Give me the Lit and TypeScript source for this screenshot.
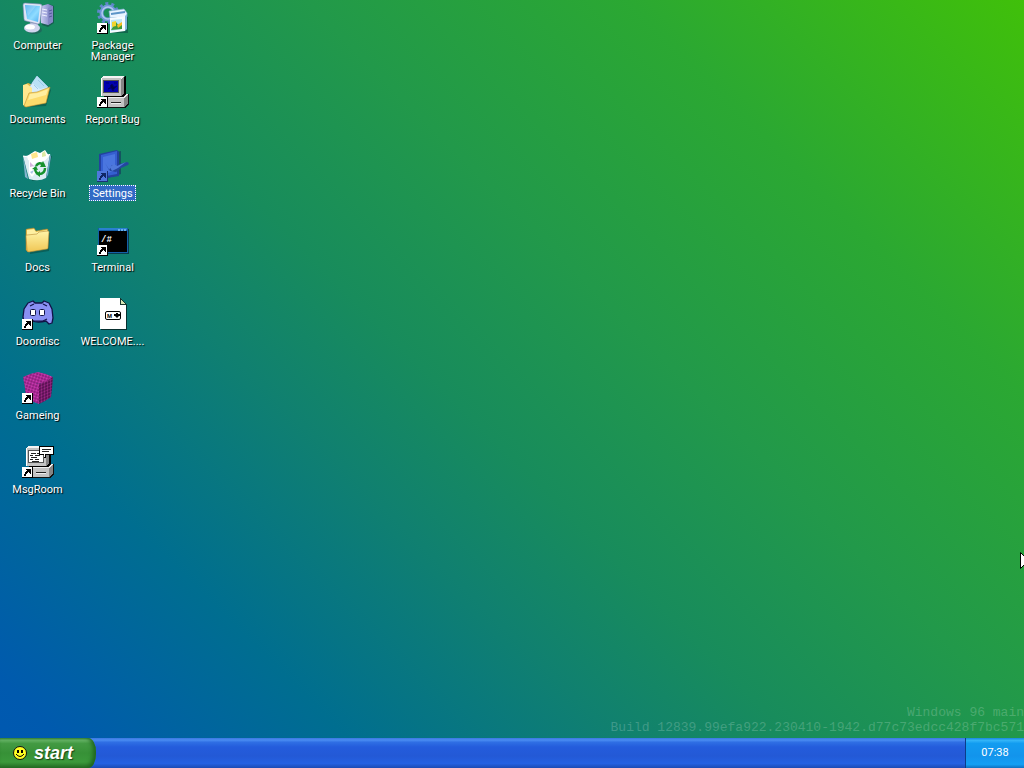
import { LitElement, html, svg, css } from "lit";
import { customElement, property, state } from "lit/decorators.js";
import { classMap } from "lit/directives/class-map.js";

const arrow = "M4 23h5v5H8v-1H7v-1H6v1H5v1H4v2H2v-2h1v-2h1v-1h1v-1H4z";

const shortcut = svg`
  <g shape-rendering="crispEdges">
    <rect x="0" y="21" width="11" height="11" fill="#000"/>
    <rect x="0" y="21" width="10" height="10" fill="#fff"/>
    <path d="${arrow}" fill="#000"/>
  </g>`;

const pc = (screen: string) => svg`
  <g shape-rendering="crispEdges">
    <path d="M7 2h19l2-2h1v18l-3 3h-19z" fill="#000"/>
    <path d="M6 0h21v1h-1v1h-1v1h-20v-2h1z" fill="#f4f4f4"/>
    <rect x="4" y="2" width="20" height="18" fill="#c3c3c3"/>
    <rect x="4" y="2" width="1" height="18" fill="#fff"/>
    <path d="M24 3l3-3v18l-3 2z" fill="#858585"/>
    <rect x="6" y="4" width="16" height="13" fill="#555"/>
    <rect x="7" y="5" width="14" height="11" fill="${screen}"/>
    <path d="M1 21h24l4-3h3v10l-4 4h-27z" fill="#111"/>
    <path d="M2 21h24l3-3h2l-4 4h-25z" fill="#eee"/>
    <rect x="2" y="22" width="25" height="9" fill="#c3c3c3"/>
    <path d="M27 22l4-4v9l-4 4z" fill="#858585"/>
    <rect x="14" y="26" width="10" height="1" fill="#222"/>
    <rect x="14" y="27" width="10" height="1" fill="#eee"/>
  </g>`;

const icons: Record<string, unknown> = {
  computer: svg`
    <defs>
      <linearGradient id="scr" x2="1" y2="1"><stop stop-color="#3fa4ee"/><stop offset=".6" stop-color="#8fdcff"/><stop offset="1" stop-color="#4caef0"/></linearGradient>
      <linearGradient id="cas"><stop stop-color="#c9cdf2"/><stop offset="1" stop-color="#6f74bb"/></linearGradient>
    </defs>
    <path d="M20 4l7-2 5 2v17l-6 4-6-2z" fill="#193c46" opacity=".55"/>
    <path d="M19 4l7-2 5 2v16l-5 3-7-2z" fill="url(#cas)"/>
    <path d="M26 6l5-2v16l-5 3z" fill="#8388c6"/>
    <path d="M20 7l5 1M20 10l5 1M20 13l5 1" stroke="#eef0ff" stroke-width="1"/>
    <path d="M27 9l3-1M27 12l3-1M27 15l3-1" stroke="#555b9c" stroke-width="1"/>
    <path d="M8 20l8 1v5h-7z" fill="#9ea5c8"/>
    <ellipse cx="12" cy="28" rx="8" ry="4" fill="#284c55" opacity=".5"/>
    <ellipse cx="10" cy="26" rx="8" ry="4.500" fill="#d0d5ee"/>
    <ellipse cx="8" cy="25" rx="5" ry="2.500" fill="#fff"/>
    <path d="M1 3q0-2 2-2l15 1q2 0 2 2l-2 16q0 2-2 2l-12-3q-2 0-2-2z" fill="#dfe5f6" stroke="#7782ae" stroke-width=".6"/>
    <path d="M3 3l15 1-2 16-11-3z" fill="url(#scr)"/>
    <path d="M3 3l11 1-8 10z" fill="#fff" opacity=".2"/>`,
  documents: svg`
    <path d="M4 11l12-8 13 11-5 16-20 1z" fill="#0a453c" opacity=".5"/>
    <path d="M2 9l4-2 5 2 8-2 4 3v17l-20 4z" fill="#e5b943"/>
    <path d="M6 13l9-13 11 11-3 12-14 3z" fill="#d6ecfb" stroke="#8eb9d9" stroke-width=".7"/>
    <path d="M15 0l11 11-8 2-8-6z" fill="#b9e0f5"/>
    <path d="M16 4l6 6M12 9l4 4" stroke="#90c4e6" stroke-width=".8"/>
    <path d="M1 9l4-1 5 4v7l-7 11-2-1z" fill="#ffe88f"/>
    <path d="M2 30l5-13 8-1 13-5-4 16-20 4z" fill="#fddb6b" stroke="#bd902f" stroke-width=".6"/>
    <path d="M8 18l8-1 10-4-2 6-18 5z" fill="#fff3ae" opacity=".8"/>`,
  recycle: svg`
    <path d="M5 8l25-2-6 22-14 3z" fill="#09443c" opacity=".5"/>
    <path d="M1 6l27-2-4 24q-7 4-17 1z" fill="#dcecf3"/>
    <path d="M1 6l5 23-3-2z" fill="#83b4ce"/><path d="M28 4l-4 24 2-3 3-18z" fill="#6fa9c8"/>
    <path d="M5 6l8-5 5 2 5-3 4 6-5 5-9 2-7-3z" fill="#fff"/>
    <path d="M9 4l6-2 1 5-6 2z" fill="#ffe68b"/><path d="M20 3l3-2 1 5-4 1z" fill="#dce9a4"/>
    <path d="M7 10l7 3-3 3 4 5-5 6-3-4z" fill="#fff"/><path d="M8 12l4 4-4 1z" fill="#d5b4dd"/><path d="M8 22l4-2-2 4z" fill="#a8c4e5"/>
    <g fill="none" stroke="#16912c" stroke-width="2.400"><path d="M14 16q3-5 8-1"/><path d="M23 18q0 6-6 6"/><path d="M13 18q0 4 3 6"/></g>
    <path d="M21 11l3 6-6 0zM18 21v6l-4-3zM10 19l4-3 2 4z" fill="#16912c"/>
    <path d="M1 6l5 1 8 5 9-2 5-6" fill="none" stroke="#fff"/>`,
  folder: svg`
    <defs><linearGradient id="fld" x2="0" y2="1"><stop stop-color="#fff4a8"/><stop offset="1" stop-color="#f0c654"/></linearGradient></defs>
    <path d="M6 8l22 1-1 18-19 3z" fill="#094a40" opacity=".55"/>
    <path d="M4 6q0-1 1-1l7-1 2 3 11-2q1 0 1 1v5l-20 17-2-2z" fill="#e8bd4a" stroke="#a77f2e" stroke-width=".5"/>
    <path d="M5 6l7-1 2 3 11-2v4l-20 3z" fill="#fff0a1"/>
    <path d="M4 12q0-1 1-1l10-1 2-2 9-1q1 0 1 1l-1 16q0 1-1 1l-18 3q-2 0-2-2z" fill="url(#fld)" stroke="#b88c35" stroke-width=".6"/>`,
  discord: svg`
    <path d="M6 5l5-2 2 2h7l2-2 5 2 3 6 1 9-1 5-3 1-3-3q-8 2-14 0l-3 3-5-2-1-5 1-8z" fill="#8990f3" stroke="#111347" stroke-width="1.300" stroke-linejoin="round"/>
    <path d="M8 8l4-2M25 8l-4-2M9 22l3 1h9l4-2" fill="none" stroke="#111347" stroke-width="1.200"/>
    <rect x="8.500" y="11.500" width="5" height="6" rx="1" fill="#fff" stroke="#111347"/>
    <rect x="17.500" y="11.500" width="5" height="6" rx="1" fill="#fff" stroke="#111347"/>${shortcut}`,
  cube: svg`
    <defs><pattern id="dots" width="3" height="3" patternUnits="userSpaceOnUse" patternTransform="rotate(18)"><path d="M0 0h3v3H0z" fill="#7a176b"/><circle cx="1.500" cy="1.500" r="1.200" fill="#cf3bb5"/></pattern>
    <pattern id="dots2" width="3" height="3" patternUnits="userSpaceOnUse" patternTransform="skewY(-22)"><path d="M0 0h3v3H0z" fill="#4c0c47"/><circle cx="1.500" cy="1.500" r="1.200" fill="#9a2785"/></pattern></defs>
    <path d="M1 5L8 2l8-2 8 2 7 3-6 5-8 2-9-2z" fill="url(#dots)"/><path d="M1 5l7 4 9 3v20l-8-3-5-3-1-10z" fill="url(#dots)"/><path d="M17 12l8-3 6-4-1 12-1 8-6 4-6 3z" fill="url(#dots2)"/>${shortcut}`,
  message: svg`${pc("#fff")}
    <g shape-rendering="crispEdges"><path d="M9 7h5M15 7h2M8 9h3M13 9h5M9 11h6M8 13h3M13 13h4M10 15h7" stroke="#222"/>
    <path d="M17 0h15v9h-8v3h-2v-3h-5z" fill="#000"/><path d="M18 1h13v7h-8v3h-1V8h-4z" fill="#fff"/><path d="M20 3.500h9M20 5.500h7" stroke="#222"/></g>${shortcut}`,
  pack: svg`
    <g transform="translate(11 11)"><circle r="9.500" fill="none" stroke="#5f86cb" stroke-width="3" stroke-dasharray="3 2.970"/><circle r="6.500" fill="none" stroke="#6f96d8" stroke-width="4"/>
    <circle r="6" fill="none" stroke="#b0c8f0" stroke-width="1.500"/></g>
    <path d="M13 14h18v17H14z" fill="#0b4c45" opacity=".6"/>
    <path d="M12 9l15-2 3 4v4l-17 1z" fill="#e9f5ff" stroke="#7eaed4" stroke-width=".7"/>
    <path d="M14 12l14-2" stroke="#5d95c7" stroke-width="2"/>
    <path d="M13 16l15-2v15l-15 2z" fill="#f7fcff"/><path d="M28 14l2-2v15l-2 2z" fill="#82b7df"/>
    <path d="M14 18l11-1v10l-11 2z" fill="#bce6f7"/><path d="M14 28l5-8 3 4 3-3v6z" fill="#3d9a3b"/><path d="M15 20l4-1v5l-4 1z" fill="#f2d52e"/><path d="M20 23l5-3v3l-4 3z" fill="#f5bd22"/>${shortcut}`,
  bug: svg`${pc("#0000b0")}
    <path d="M9 7h3M17 7h3M13 10l2-2 2 3 3-1-3 3-1 2-2-3-3 1 3-2z" fill="#000050" stroke="#000070"/>${shortcut}`,
  settings: svg`
    <path d="M6 5l18-4v23L7 29z" fill="#15345b" opacity=".6"/>
    <path d="M2 4l18-4 2 2v24L4 29l-2-2z" fill="#23419e"/><path d="M4 5l16-4v23L4 27z" fill="#355fd0"/><path d="M6 7l12-3v17L6 24z" fill="#4a76df"/>
    <path d="M8 13l4 7 3-5 4 2 4-3 7-2q3 1 1 3l-7 3-5 4-6-1z" fill="#24469f"/><path d="M10 12l3 5 4-3 3 2 9-4-8 6-6 3z" fill="#4f79da"/>
    <g shape-rendering="crispEdges"><rect y="21" width="11" height="11" fill="#193275"/><rect y="21" width="10" height="10" fill="#4f78dc"/><path d="${arrow}" fill="#102765"/></g>`,
  terminal: svg`
    <g shape-rendering="crispEdges"><rect x="2" y="5" width="30" height="25" fill="#073b4a"/><rect x="1" y="4" width="30" height="25" fill="#145fa8"/>
    <rect x="2" y="4" width="28" height="2" fill="#2a80d0"/><path d="M21 5h2v2h-2zM24 5h2v2h-2zM27 5h2v2h-2z" fill="#6ab0ee"/><rect x="2" y="7" width="28" height="21" fill="#000"/></g>
    <text class="prompt" x="4" y="18">/#</text>${shortcut}`,
  markdown: svg`
    <g shape-rendering="crispEdges"><path d="M4 1h20l6 6v25H4z" fill="#082f2f"/><path d="M3 0h20v6h6v25H3z" fill="#fff"/><path d="M23 0l6 6h-6z" fill="#d7e8b5" stroke="#17352f"/></g>
    <rect x="8.500" y="13.500" width="15" height="8" rx="1.500" fill="#fff" stroke="#000"/><text class="md" x="10" y="20">M</text>
    <path d="M19 15h2v1h2v2h-1l-2 2-2-2h-1v-2h2z" fill="#000"/>`,
};

@customElement("desktop-icon")
class DesktopIcon extends LitElement {
  @property() icon = "";
  @property() label = "";
  @property({ type: Boolean }) selected = false;
  static styles = css`
    :host { display: block; height: 74px; }
    .item { display: flex; flex-direction: column; align-items: center; gap: 3px; width: 100%; height: 100%; border: 0; padding: 0; background: none; cursor: default; color: #fff; font: 11px/11px Roboto, sans-serif; }
    .picture { width: 32px; height: 32px; flex: none; overflow: visible; }
    .label { max-width: 70px; box-sizing: border-box; padding: 2px 2px 1px; border: 1px solid transparent; text-shadow: 1px 1px 1px #000; overflow: hidden; text-overflow: ellipsis; }
    .selected { background: #316ac5; border: 1px dotted #fff; text-shadow: none; }
    .prompt { font: bold 9px "Liberation Mono", monospace; fill: #fff; }
    .md { font: bold 6px "Liberation Sans", sans-serif; }
  `;
  render() {
    return html`<button class="item">
      <svg class="picture" viewBox="0 0 32 32" aria-hidden="true">${icons[this.icon]}</svg>
      <span class=${classMap({ label: true, selected: this.selected })}>${this.label}</span>
    </button>`;
  }
}

@customElement("app-root")
class AppRoot extends LitElement {
  @state() private selected = "Settings";
  private columns = [
    [["computer", "Computer"], ["documents", "Documents"], ["recycle", "Recycle Bin"], ["folder", "Docs"], ["discord", "Doordisc"], ["cube", "Gameing"], ["message", "MsgRoom"]],
    [["pack", "Package Manager"], ["bug", "Report Bug"], ["settings", "Settings"], ["terminal", "Terminal"], ["markdown", "WELCOME...."]],
  ];
  static styles = css`
    :host { display: flex; flex-direction: column; height: 100vh; overflow: hidden; position: relative;
      background: linear-gradient(45deg, #0058b2 0%, #005aae 5%, #006e90 21%, #108070 36%, #188c5c 46%, #22994a 60%, #2ba832 78%, #40c00a 100%); }
    .desktop { flex: 1; display: flex; flex-direction: column; justify-content: space-between; padding-top: 2px; }
    .icons { display: grid; grid-template-columns: 75px 75px; align-items: start; }
    .version { margin: 0; padding-bottom: 3px; text-align: right; font: 13px/15px "Liberation Mono", monospace; color: rgba(255, 255, 255, 0.2); }
    .taskbar { display: flex; height: 30px; flex: none; background: linear-gradient(#3a78e0 0, #4a8cf2 7%, #2f6fe4 14%, #245cdc 30%, #2359d6 60%, #2461e2 85%, #1c4bb4 100%); }
    .start { display: flex; align-items: center; gap: 7px; width: 96px; padding: 0 0 0 13px; border: 0; border-radius: 0 8px 8px 0 / 0 14px 14px 0; color: #fff; font: italic bold 18px/30px "Liberation Sans", sans-serif; text-shadow: 1px 1px 1px #1b4416;
      background: linear-gradient(#3c8b3c 0, #67b467 7%, #439a43 18%, #379137 50%, #3b993b 80%, #2b772b 100%); box-shadow: inset -3px -1px 4px #1f651f; }
    .face { width: 14px; height: 14px; }
    .tray { display: flex; align-items: center; justify-content: center; box-sizing: border-box; width: 59px; margin-left: auto; border-left: 1px solid #0b3c89; color: #fff; font: 11px/14px Roboto, sans-serif;
      background: linear-gradient(#1b86dc 0, #32b4f8 8%, #129cf0 18%, #1294ec 60%, #139ff4 88%, #0e70c0 100%); }
    .pointer { position: absolute; right: -8px; top: 552px; width: 12px; height: 20px; }
  `;
  render() {
    return html`
      <main class="desktop">
        <div class="icons">
          ${this.columns.map((c) => html`<div>${c.map(([icon, label]) => html`<desktop-icon .icon=${icon} .label=${label} .selected=${this.selected === label} @click=${() => (this.selected = label)}></desktop-icon>`)}</div>`)}
        </div>
        <p class="version">Windows 96 main<br />Build 12839.99efa922.230410-1942.d77c73edcc428f7bc571</p>
      </main>
      <footer class="taskbar">
        <button class="start">
          <svg class="face" viewBox="0 0 14 14" aria-hidden="true"><circle cx="7" cy="7" r="6.500" fill="#ff2" stroke="#111"/><path d="M4 4h2v3H4zM8 4h2v3H8z" fill="#000"/><path d="M3 8q4 5 8 0" fill="none" stroke="#000"/></svg>
          <span>start</span>
        </button>
        <time class="tray">07:38</time>
      </footer>
      <svg class="pointer" viewBox="0 0 12 20" aria-hidden="true"><path d="M.5.500v16l4-4 3 6 2-1-3-6h5z" fill="#fff" stroke="#000"/></svg>`;
  }
}
